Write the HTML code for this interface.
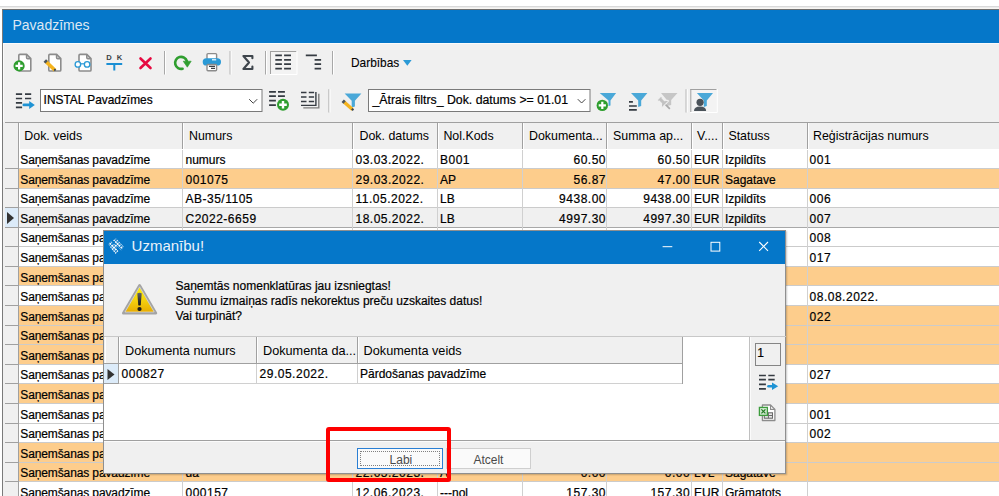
<!DOCTYPE html><html><head><meta charset="utf-8"><style>
*{margin:0;padding:0;box-sizing:border-box}
html,body{width:999px;height:496px;overflow:hidden;background:#fff;font-family:"Liberation Sans", sans-serif;color:#000}
.a{position:absolute}
.t{position:absolute;white-space:nowrap;font-size:12px;line-height:12px;-webkit-text-stroke:0.2px currentColor}
.r{text-align:right}

</style></head><body>
<div class="a" style="left:0;top:6px;width:999px;height:1px;background:#d9d9d9"></div>
<div class="a" style="left:0;top:7px;width:999px;height:1px;background:#ececec"></div>
<div class="a" style="left:0;top:8px;width:999px;height:1px;background:#f8f6f3"></div>
<div class="a" style="left:2px;top:9px;width:997px;height:487px;background:#f0f0f0;border-left:1px solid #7a7a7a;border-top:1px solid #6e6e6e"></div>
<div class="a" style="left:2.5px;top:10px;width:996.5px;height:33px;background:#0577c9"></div>
<div class="a" style="left:3px;top:43px;width:996px;height:1px;background:#fbfbfb"></div>
<div class="a" style="left:3px;top:43px;width:1px;height:79px;background:#fbfbfb"></div>
<div class="t" style="left:12.5px;top:18px;font-size:14px;line-height:14px;color:#dde7f3;-webkit-text-stroke:0">Pavadzīmes</div>
<div class="a" style="left:5px;top:122px;width:994px;height:1px;background:#a0a0a0"></div>
<div class="a" style="left:5px;top:123px;width:994px;height:26px;background:#f0f0f0"></div>
<div class="a" style="left:5px;top:149px;width:994px;height:1px;background:#a0a0a0"></div>
<div class="a" style="left:5px;top:150px;width:994px;height:346px;background:#fff"></div>
<div class="a" style="left:19px;top:149.40px;width:980px;height:19.58px;background:#ffffff;border-bottom:1px solid #cbcbcb"></div>
<div class="a" style="left:5px;top:149.40px;width:13px;height:19.58px;background:#f0f0f0;border-bottom:1px solid #a0a0a0"></div>
<div class="t" style="left:20.3px;top:154.04px;letter-spacing:-0.12px">Saņemšanas pavadzīme</div>
<div class="t" style="left:185.5px;top:154.04px">numurs</div>
<div class="t" style="left:355.5px;top:154.04px;letter-spacing:0.5px">03.03.2022.</div>
<div class="t" style="left:440px;top:154.04px;letter-spacing:0.5px">B001</div>
<div class="t r" style="left:506.0px;width:100px;top:154.04px;letter-spacing:0.5px">60.50</div>
<div class="t r" style="left:590.1px;width:100px;top:154.04px;letter-spacing:0.5px">60.50</div>
<div class="t" style="left:694px;top:154.04px">EUR</div>
<div class="t" style="left:725px;top:154.04px">Izpildīts</div>
<div class="t" style="left:809.6px;top:154.04px;letter-spacing:0.5px">001</div>
<div class="a" style="left:19px;top:168.98px;width:980px;height:19.58px;background:#fdcd8c;border-bottom:1px solid #cbcbcb"></div>
<div class="a" style="left:5px;top:168.98px;width:13px;height:19.58px;background:#f0f0f0;border-bottom:1px solid #a0a0a0"></div>
<div class="t" style="left:20.3px;top:173.62px;letter-spacing:-0.12px">Saņemšanas pavadzīme</div>
<div class="t" style="left:185.5px;top:173.62px;letter-spacing:0.5px">001075</div>
<div class="t" style="left:355.5px;top:173.62px;letter-spacing:0.5px">29.03.2022.</div>
<div class="t" style="left:440px;top:173.62px">AP</div>
<div class="t r" style="left:506.0px;width:100px;top:173.62px;letter-spacing:0.5px">56.87</div>
<div class="t r" style="left:590.1px;width:100px;top:173.62px;letter-spacing:0.5px">47.00</div>
<div class="t" style="left:694px;top:173.62px">EUR</div>
<div class="t" style="left:725px;top:173.62px">Sagatave</div>
<div class="a" style="left:19px;top:188.56px;width:980px;height:19.58px;background:#ffffff;border-bottom:1px solid #cbcbcb"></div>
<div class="a" style="left:5px;top:188.56px;width:13px;height:19.58px;background:#f0f0f0;border-bottom:1px solid #a0a0a0"></div>
<div class="t" style="left:20.3px;top:193.20px;letter-spacing:-0.12px">Saņemšanas pavadzīme</div>
<div class="t" style="left:185.5px;top:193.20px;letter-spacing:0.5px">AB-35/1105</div>
<div class="t" style="left:355.5px;top:193.20px;letter-spacing:0.5px">11.05.2022.</div>
<div class="t" style="left:440px;top:193.20px">LB</div>
<div class="t r" style="left:506.0px;width:100px;top:193.20px;letter-spacing:0.5px">9438.00</div>
<div class="t r" style="left:590.1px;width:100px;top:193.20px;letter-spacing:0.5px">9438.00</div>
<div class="t" style="left:694px;top:193.20px">EUR</div>
<div class="t" style="left:725px;top:193.20px">Izpildīts</div>
<div class="t" style="left:809.6px;top:193.20px;letter-spacing:0.5px">006</div>
<div class="a" style="left:19px;top:208.14px;width:980px;height:19.58px;background:#f0f0f0;border-bottom:1px solid #a8a8a8"></div>
<div class="a" style="left:5px;top:208.14px;width:13px;height:19.58px;background:#dcebf9;border-bottom:1px solid #a0a0a0"></div>
<svg class="a" style="left:6px;top:211.14px" width="10" height="14"><path d="M1 1 L8 7 L1 13Z" fill="#333"/></svg>
<div class="t" style="left:20.3px;top:212.78px;letter-spacing:-0.12px">Saņemšanas pavadzīme</div>
<div class="t" style="left:185.5px;top:212.78px;letter-spacing:0.5px">C2022-6659</div>
<div class="t" style="left:355.5px;top:212.78px;letter-spacing:0.5px">18.05.2022.</div>
<div class="t" style="left:440px;top:212.78px">LB</div>
<div class="t r" style="left:506.0px;width:100px;top:212.78px;letter-spacing:0.5px">4997.30</div>
<div class="t r" style="left:590.1px;width:100px;top:212.78px;letter-spacing:0.5px">4997.30</div>
<div class="t" style="left:694px;top:212.78px">EUR</div>
<div class="t" style="left:725px;top:212.78px">Izpildīts</div>
<div class="t" style="left:809.6px;top:212.78px;letter-spacing:0.5px">007</div>
<div class="a" style="left:19px;top:227.72px;width:980px;height:19.58px;background:#ffffff;border-bottom:1px solid #cbcbcb"></div>
<div class="a" style="left:5px;top:227.72px;width:13px;height:19.58px;background:#f0f0f0;border-bottom:1px solid #a0a0a0"></div>
<div class="t" style="left:20.3px;top:232.36px;letter-spacing:-0.12px">Saņemšanas pavadzīme</div>
<div class="t" style="left:809.6px;top:232.36px;letter-spacing:0.5px">008</div>
<div class="a" style="left:19px;top:247.30px;width:980px;height:19.58px;background:#ffffff;border-bottom:1px solid #cbcbcb"></div>
<div class="a" style="left:5px;top:247.30px;width:13px;height:19.58px;background:#f0f0f0;border-bottom:1px solid #a0a0a0"></div>
<div class="t" style="left:20.3px;top:251.94px;letter-spacing:-0.12px">Saņemšanas pavadzīme</div>
<div class="t" style="left:809.6px;top:251.94px;letter-spacing:0.5px">017</div>
<div class="a" style="left:19px;top:266.88px;width:980px;height:19.58px;background:#fdcd8c;border-bottom:1px solid #cbcbcb"></div>
<div class="a" style="left:5px;top:266.88px;width:13px;height:19.58px;background:#f0f0f0;border-bottom:1px solid #a0a0a0"></div>
<div class="t" style="left:20.3px;top:271.52px;letter-spacing:-0.12px">Saņemšanas pavadzīme</div>
<div class="a" style="left:19px;top:286.46px;width:980px;height:19.58px;background:#ffffff;border-bottom:1px solid #cbcbcb"></div>
<div class="a" style="left:5px;top:286.46px;width:13px;height:19.58px;background:#f0f0f0;border-bottom:1px solid #a0a0a0"></div>
<div class="t" style="left:20.3px;top:291.10px;letter-spacing:-0.12px">Saņemšanas pavadzīme</div>
<div class="t" style="left:809.6px;top:291.10px;letter-spacing:0.5px">08.08.2022.</div>
<div class="a" style="left:19px;top:306.04px;width:980px;height:19.58px;background:#fdcd8c;border-bottom:1px solid #cbcbcb"></div>
<div class="a" style="left:5px;top:306.04px;width:13px;height:19.58px;background:#f0f0f0;border-bottom:1px solid #a0a0a0"></div>
<div class="t" style="left:20.3px;top:310.68px;letter-spacing:-0.12px">Saņemšanas pavadzīme</div>
<div class="t" style="left:809.6px;top:310.68px;letter-spacing:0.5px">022</div>
<div class="a" style="left:19px;top:325.62px;width:980px;height:19.58px;background:#fdcd8c;border-bottom:1px solid #cbcbcb"></div>
<div class="a" style="left:5px;top:325.62px;width:13px;height:19.58px;background:#f0f0f0;border-bottom:1px solid #a0a0a0"></div>
<div class="t" style="left:20.3px;top:330.26px;letter-spacing:-0.12px">Saņemšanas pavadzīme</div>
<div class="a" style="left:19px;top:345.20px;width:980px;height:19.58px;background:#fdcd8c;border-bottom:1px solid #cbcbcb"></div>
<div class="a" style="left:5px;top:345.20px;width:13px;height:19.58px;background:#f0f0f0;border-bottom:1px solid #a0a0a0"></div>
<div class="t" style="left:20.3px;top:349.84px;letter-spacing:-0.12px">Saņemšanas pavadzīme</div>
<div class="a" style="left:19px;top:364.78px;width:980px;height:19.58px;background:#ffffff;border-bottom:1px solid #cbcbcb"></div>
<div class="a" style="left:5px;top:364.78px;width:13px;height:19.58px;background:#f0f0f0;border-bottom:1px solid #a0a0a0"></div>
<div class="t" style="left:20.3px;top:369.42px;letter-spacing:-0.12px">Saņemšanas pavadzīme</div>
<div class="t" style="left:809.6px;top:369.42px;letter-spacing:0.5px">027</div>
<div class="a" style="left:19px;top:384.36px;width:980px;height:19.58px;background:#fdcd8c;border-bottom:1px solid #cbcbcb"></div>
<div class="a" style="left:5px;top:384.36px;width:13px;height:19.58px;background:#f0f0f0;border-bottom:1px solid #a0a0a0"></div>
<div class="t" style="left:20.3px;top:389.00px;letter-spacing:-0.12px">Saņemšanas pavadzīme</div>
<div class="a" style="left:19px;top:403.94px;width:980px;height:19.58px;background:#ffffff;border-bottom:1px solid #cbcbcb"></div>
<div class="a" style="left:5px;top:403.94px;width:13px;height:19.58px;background:#f0f0f0;border-bottom:1px solid #a0a0a0"></div>
<div class="t" style="left:20.3px;top:408.58px;letter-spacing:-0.12px">Saņemšanas pavadzīme</div>
<div class="t" style="left:809.6px;top:408.58px;letter-spacing:0.5px">001</div>
<div class="a" style="left:19px;top:423.52px;width:980px;height:19.58px;background:#ffffff;border-bottom:1px solid #cbcbcb"></div>
<div class="a" style="left:5px;top:423.52px;width:13px;height:19.58px;background:#f0f0f0;border-bottom:1px solid #a0a0a0"></div>
<div class="t" style="left:20.3px;top:428.16px;letter-spacing:-0.12px">Saņemšanas pavadzīme</div>
<div class="t" style="left:809.6px;top:428.16px;letter-spacing:0.5px">002</div>
<div class="a" style="left:19px;top:443.10px;width:980px;height:19.58px;background:#fdcd8c;border-bottom:1px solid #cbcbcb"></div>
<div class="a" style="left:5px;top:443.10px;width:13px;height:19.58px;background:#f0f0f0;border-bottom:1px solid #a0a0a0"></div>
<div class="t" style="left:20.3px;top:447.74px;letter-spacing:-0.12px">Saņemšanas pavadzīme</div>
<div class="a" style="left:19px;top:462.68px;width:980px;height:19.58px;background:#fdcd8c;border-bottom:1px solid #cbcbcb"></div>
<div class="a" style="left:5px;top:462.68px;width:13px;height:19.58px;background:#f0f0f0;border-bottom:1px solid #a0a0a0"></div>
<div class="t" style="left:20.3px;top:467.32px;letter-spacing:-0.12px">Saņemšanas pavadzīme</div>
<div class="t" style="left:185.5px;top:467.32px">da</div>
<div class="t" style="left:355.5px;top:467.32px;letter-spacing:0.5px">22.05.2023.</div>
<div class="t" style="left:440px;top:467.32px">A</div>
<div class="t r" style="left:506.0px;width:100px;top:467.32px;letter-spacing:0.5px">0.00</div>
<div class="t r" style="left:590.1px;width:100px;top:467.32px;letter-spacing:0.5px">0.00</div>
<div class="t" style="left:694px;top:467.32px">LVL</div>
<div class="t" style="left:725px;top:467.32px">Sagatave</div>
<div class="a" style="left:19px;top:482.26px;width:980px;height:19.58px;background:#ffffff;border-bottom:1px solid #cbcbcb"></div>
<div class="a" style="left:5px;top:482.26px;width:13px;height:19.58px;background:#f0f0f0;border-bottom:1px solid #a0a0a0"></div>
<div class="t" style="left:20.3px;top:486.90px;letter-spacing:-0.12px">Saņemšanas pavadzīme</div>
<div class="t" style="left:185.5px;top:486.90px;letter-spacing:0.5px">000157</div>
<div class="t" style="left:355.5px;top:486.90px;letter-spacing:0.5px">12.06.2023.</div>
<div class="t" style="left:440px;top:486.90px">---nol</div>
<div class="t r" style="left:506.0px;width:100px;top:486.90px;letter-spacing:0.5px">157.30</div>
<div class="t r" style="left:590.1px;width:100px;top:486.90px;letter-spacing:0.5px">157.30</div>
<div class="t" style="left:694px;top:486.90px">EUR</div>
<div class="t" style="left:725px;top:486.90px">Grāmatots</div>
<div class="a" style="left:18px;top:123px;width:1px;height:26px;background:#a0a0a0"></div>
<div class="a" style="left:19px;top:123px;width:1px;height:26px;background:#fff"></div>
<div class="a" style="left:18px;top:150px;width:1px;height:346px;background:#a0a0a0"></div>
<div class="a" style="left:182px;top:123px;width:1px;height:26px;background:#a0a0a0"></div>
<div class="a" style="left:183px;top:123px;width:1px;height:26px;background:#fff"></div>
<div class="a" style="left:182px;top:150px;width:1px;height:346px;background:#d0d0d0"></div>
<div class="a" style="left:352px;top:123px;width:1px;height:26px;background:#a0a0a0"></div>
<div class="a" style="left:353px;top:123px;width:1px;height:26px;background:#fff"></div>
<div class="a" style="left:352px;top:150px;width:1px;height:346px;background:#d0d0d0"></div>
<div class="a" style="left:437px;top:123px;width:1px;height:26px;background:#a0a0a0"></div>
<div class="a" style="left:438px;top:123px;width:1px;height:26px;background:#fff"></div>
<div class="a" style="left:437px;top:150px;width:1px;height:346px;background:#d0d0d0"></div>
<div class="a" style="left:522px;top:123px;width:1px;height:26px;background:#a0a0a0"></div>
<div class="a" style="left:523px;top:123px;width:1px;height:26px;background:#fff"></div>
<div class="a" style="left:522px;top:150px;width:1px;height:346px;background:#d0d0d0"></div>
<div class="a" style="left:606px;top:123px;width:1px;height:26px;background:#a0a0a0"></div>
<div class="a" style="left:607px;top:123px;width:1px;height:26px;background:#fff"></div>
<div class="a" style="left:606px;top:150px;width:1px;height:346px;background:#d0d0d0"></div>
<div class="a" style="left:691px;top:123px;width:1px;height:26px;background:#a0a0a0"></div>
<div class="a" style="left:692px;top:123px;width:1px;height:26px;background:#fff"></div>
<div class="a" style="left:691px;top:150px;width:1px;height:346px;background:#d0d0d0"></div>
<div class="a" style="left:722px;top:123px;width:1px;height:26px;background:#a0a0a0"></div>
<div class="a" style="left:723px;top:123px;width:1px;height:26px;background:#fff"></div>
<div class="a" style="left:722px;top:150px;width:1px;height:346px;background:#d0d0d0"></div>
<div class="a" style="left:807px;top:123px;width:1px;height:26px;background:#a0a0a0"></div>
<div class="a" style="left:808px;top:123px;width:1px;height:26px;background:#fff"></div>
<div class="a" style="left:807px;top:150px;width:1px;height:346px;background:#d0d0d0"></div>
<div class="t" style="left:24.3px;top:130.00px;font-size:12.4px;line-height:12.4px;-webkit-text-stroke:0">Dok. veids</div>
<div class="t" style="left:189px;top:130.00px;font-size:12.4px;line-height:12.4px;-webkit-text-stroke:0">Numurs</div>
<div class="t" style="left:359.5px;top:130.00px;font-size:12.4px;line-height:12.4px;-webkit-text-stroke:0">Dok. datums</div>
<div class="t" style="left:443.4px;top:130.00px;font-size:12.4px;line-height:12.4px;-webkit-text-stroke:0">Nol.Kods</div>
<div class="t" style="left:529px;top:130.00px;font-size:12.4px;line-height:12.4px;-webkit-text-stroke:0">Dokumenta...</div>
<div class="t" style="left:613px;top:130.00px;font-size:12.4px;line-height:12.4px;-webkit-text-stroke:0">Summa ap...</div>
<div class="t" style="left:697px;top:130.00px;font-size:12.4px;line-height:12.4px;-webkit-text-stroke:0">V....</div>
<div class="t" style="left:728.4px;top:130.00px;font-size:12.4px;line-height:12.4px;-webkit-text-stroke:0">Statuss</div>
<div class="t" style="left:813px;top:130.00px;font-size:12.4px;line-height:12.4px;-webkit-text-stroke:0">Reģistrācijas numurs</div>
<svg class="a" style="left:0;top:0" width="999" height="122" viewBox="0 0 999 122">
<!-- doc icons -->
<g stroke="#8c8c8c" stroke-width="1.6" fill="#fff" stroke-linejoin="round">
 <path d="M18.8 55.5 Q18.8 54.4 19.9 54.4 L26.6 54.4 L30.8 58.6 L30.8 69.9 Q30.8 71 29.7 71 L19.9 71 Q18.8 71 18.8 69.9Z"/>
 <path d="M26.6 54.4 L26.6 57.5 Q26.6 58.6 27.7 58.6 L30.8 58.6" fill="none"/>
 <path d="M48.8 55.5 Q48.8 54.4 49.9 54.4 L56.6 54.4 L60.8 58.6 L60.8 69.9 Q60.8 71 59.7 71 L49.9 71 Q48.8 71 48.8 69.9Z"/>
 <path d="M56.6 54.4 L56.6 57.5 Q56.6 58.6 57.7 58.6 L60.8 58.6" fill="none"/>
 <path d="M79 55.5 Q79 54.4 80.1 54.4 L86.8 54.4 L91 58.6 L91 69.9 Q91 71 89.9 71 L80.1 71 Q79 71 79 69.9Z"/>
 <path d="M86.8 54.4 L86.8 57.5 Q86.8 58.6 87.9 58.6 L91 58.6" fill="none"/>
</g>
<circle cx="19.1" cy="65.9" r="5.6" fill="#2f9e2f"/>
<path d="M19.1 62.3 V69.5 M15.5 65.9 H22.7" stroke="#fff" stroke-width="2.2"/>
<!-- pencil -->
<path d="M45.6 61.3 L55 70.2" stroke="#f4b31e" stroke-width="3.6"/>
<path d="M44.8 60.5 L46.6 62.2" stroke="#4a5560" stroke-width="3.6"/>
<path d="M54.2 69.3 L55.6 70.6" stroke="#3a4550" stroke-width="2"/>
<!-- glasses -->
<g stroke="#2b9ad6" stroke-width="1.35" fill="#fff">
<circle cx="77.9" cy="64.4" r="2.75"/><circle cx="87.1" cy="64.4" r="2.75"/>
</g>
<path d="M80.6 63.8 H84.4" stroke="#2b9ad6" stroke-width="1.2"/>
<!-- DK -->
<text x="106.2" y="60.3" font-family="Liberation Sans" font-weight="bold" font-size="7.6" fill="#3b3f44">D</text>
<text x="116.8" y="60.3" font-family="Liberation Sans" font-weight="bold" font-size="7.6" fill="#3b3f44">K</text>
<path d="M106.4 64 H122.2 M114.3 64 V70.5" stroke="#1a8fd4" stroke-width="2"/>
<!-- red X -->
<path d="M140.5 58.5 L150.5 68 M150.5 58.5 L140.5 68" stroke="#e60a41" stroke-width="2.6" stroke-linecap="round"/>
<!-- separators -->
<g fill="#a8a8a8">
<rect x="164" y="51" width="1" height="23.5"/><rect x="229.6" y="51" width="1" height="23.5"/><rect x="265" y="51" width="1" height="23.5"/><rect x="332" y="51" width="1" height="23.5"/>
</g>
<g fill="#fff">
<rect x="165" y="51" width="1" height="23.5"/><rect x="230.6" y="51" width="1" height="23.5"/><rect x="266" y="51" width="1" height="23.5"/><rect x="333" y="51" width="1" height="23.5"/>
</g>
<!-- refresh -->
<path d="M182.6 68.7 A6 6 0 1 1 186.9 61.2" stroke="#2f9e2f" stroke-width="2.6" fill="none" stroke-linecap="round"/>
<path d="M183.2 61.2 L191.2 61.2 L187.3 67.2Z" fill="#2f9e2f" stroke="#2f9e2f" stroke-width="0.6" stroke-linejoin="round"/>
<!-- printer -->
<rect x="207" y="53.6" width="9.6" height="6" fill="#fff" stroke="#8c8c8c" stroke-width="1.4" rx="1"/>
<rect x="202.7" y="58.2" width="18.3" height="7.4" rx="3.7" fill="#2b9ad6"/>
<path d="M212 59.8 H216.2" stroke="#fff" stroke-width="1.2"/>
<rect x="207" y="64.5" width="9.6" height="6.3" fill="#fff" stroke="#8c8c8c" stroke-width="1.4" rx="1"/>
<path d="M209 66.4 H215 M211 68.4 H215" stroke="#3b3f44" stroke-width="1.1"/>
<!-- sigma -->
<path d="M252.4 58.2 V56 H243.4 L249 62.5 L243.4 69 H252.4 V66.6" stroke="#3f464d" stroke-width="2.1" fill="none" stroke-linejoin="round" stroke-linecap="round"/>
<!-- pressed button 1 -->
<rect x="270" y="51" width="27" height="23.5" fill="#f3f3f3"/>
<rect x="270" y="51" width="26.5" height="1" fill="#a0a0a0"/><rect x="270" y="51" width="1" height="23" fill="#a0a0a0"/>
<rect x="270" y="74" width="27" height="1" fill="#fff"/><rect x="296.5" y="51" width="1" height="23.5" fill="#fff"/>
<g stroke="#353b42" stroke-width="1.7">
<path d="M275.3 55.4 H281.9 M284.1 55.4 H291 M275.3 59.8 H281.9 M284.1 59.8 H291 M275.3 64.2 H281.9 M284.1 64.2 H291 M275.3 68.6 H281.9 M284.1 68.6 H291"/>
<path d="M305.8 55.4 H316.9 M314.6 59.8 H321.1 M314.6 64.2 H321.1 M314.6 68.6 H321.1"/>
</g>
<path d="M403 60 H411.6 L407.3 65.8Z" fill="#2b9ad6"/>
<!-- row 2 -->
<g stroke="#353b42" stroke-width="1.7">
<path d="M15.9 94.2 H22.1 M25 94.2 H31.2 M15.9 98.5 H22.1 M25 98.5 H31.2 M15.9 102.9 H22.1 M15.9 107.4 H22.1"/>
</g>
<path d="M23.8 104.9 H30" stroke="#1f93d4" stroke-width="2.6" stroke-linecap="round"/>
<path d="M29.2 101 L34.8 104.9 L29.2 108.9Z" fill="#1f93d4"/>
<!-- combobox 1 -->
<rect x="40.5" y="89.5" width="221.5" height="22" fill="#fff" stroke="#7a7a7a" stroke-width="1"/>
<path d="M249.2 99.2 L253.2 103.2 L257.2 99.2" stroke="#444" stroke-width="1" fill="none"/>
<!-- list add -->
<g stroke="#353b42" stroke-width="1.7">
<path d="M269.1 91.9 H275.9 M278 91.9 H284.9 M269.1 96.2 H275.9 M278 96.2 H284.9 M269.1 100.7 H275.9 M269.1 105.2 H275.9"/>
</g>
<circle cx="283" cy="104.8" r="6" fill="#2f9e2f"/>
<path d="M283 101 V108.6 M279.2 104.8 H286.8" stroke="#fff" stroke-width="2.4"/>
<!-- stacked -->
<path d="M303.3 107.9 H318.8 V93.7" stroke="#7d7d7d" stroke-width="1.4" fill="none"/>
<path d="M301 105.4 H315.9 V92.1" stroke="#353b42" stroke-width="1.4" fill="none"/>
<g stroke="#353b42" stroke-width="1.6">
<path d="M301 92.5 H306.5 M308.8 92.5 H314.1 M301 97 H306.5 M308.8 97 H314.1 M301 101.5 H306.5 M308.8 101.5 H314.1"/>
</g>
<!-- separators row 2 -->
<rect x="328.3" y="89.2" width="1.2" height="23.3" fill="#b8b8b8"/><rect x="329.5" y="89.2" width="1" height="23.3" fill="#fff"/>
<rect x="685.5" y="89.2" width="1.2" height="23.3" fill="#b8b8b8"/><rect x="686.7" y="89.2" width="1" height="23.3" fill="#fff"/>
<!-- filter pencil -->
<path d="M344.6 93.4 H361.4 L354.9 100.8 V106.6 L351.7 107.5 V100.8Z" fill="#4aa8d8"/>
<path d="M343.5 101.5 L352.5 109.5" stroke="#f4b31e" stroke-width="3.4"/>
<path d="M342.7 100.7 L344.6 102.4" stroke="#4a5560" stroke-width="3.4"/>
<path d="M351.8 108.8 L353.4 110.3" stroke="#3a4550" stroke-width="2"/>
<!-- combobox 2 -->
<rect x="368.5" y="89.5" width="221.5" height="22" fill="#fff" stroke="#7a7a7a" stroke-width="1"/>
<path d="M577.8 99.2 L581.6 103 L585.4 99.2" stroke="#444" stroke-width="1" fill="none"/>
<!-- filter add -->
<path d="M599.7 93.1 H616.1 L610.5 100.5 V105.4 L608.5 106 V100.5Z" fill="#4aa8d8"/>
<circle cx="602.3" cy="105.4" r="5.7" fill="#2f9e2f"/>
<path d="M602.3 101.8 V109 M598.7 105.4 H605.9" stroke="#fff" stroke-width="2.2"/>
<!-- filter list -->
<path d="M631 93.1 H647.4 L641.2 100.5 V106 L638.2 107 V100.5Z" fill="#4aa8d8"/>
<path d="M629 101.8 H632.9 M629 106 H636.8 M629 109.9 H636.8" stroke="#353b42" stroke-width="1.7"/>
<!-- pin filter disabled -->
<path d="M661 92.9 H677.5 L671.2 100.1 V105 L666.9 106 V100.1Z" fill="#c6c6c6"/>
<g transform="translate(664.2 103.2) rotate(-45)">
<path d="M-2.8 -7.2 H2.8 V-5.2 H2 V-1.6 L4.6 0.6 V1.6 H-4.6 V0.6 L-2 -1.6 V-5.2 H-2.8Z" fill="#c2c2c2" stroke="#f0f0f0" stroke-width="1"/>
<path d="M0 2 V8" stroke="#a9a9a9" stroke-width="1.7"/>
</g>
<!-- pressed button 2 -->
<rect x="690.5" y="89" width="26.5" height="23.5" fill="#f3f3f3"/>
<rect x="690.3" y="89" width="26.3" height="1" fill="#a0a0a0"/><rect x="690.3" y="89" width="1" height="23" fill="#a0a0a0"/>
<rect x="690.3" y="112" width="27" height="1" fill="#fff"/><rect x="716.8" y="89" width="1" height="23.5" fill="#fff"/>
<path d="M696.9 93 H713 L706.8 100.5 V106 L703.8 107 V100.5Z" fill="#4aa8d8"/>
<circle cx="700.1" cy="102.3" r="3.6" fill="#4a5259"/>
<path d="M694 110.9 Q694 106.4 700.1 106.4 Q706.1 106.4 706.1 110.9Z" fill="#4a5259"/>
</svg>
<div class="t" style="left:351px;top:57.2px;font-size:11.9px;line-height:12.6px;-webkit-text-stroke:0.1px currentColor">Darbības</div>
<div class="t" style="left:43.6px;top:93.6px;font-size:11.9px;line-height:12.3px">INSTAL Pavadzīmes</div>
<div class="t" style="left:372.5px;top:93.6px;font-size:12.3px;line-height:12.3px">_Ātrais filtrs_ Dok. datums &gt;= 01.01</div>

<div class="a" style="left:103px;top:229.5px;width:683px;height:244px;background:#f0f0f0;border:1px solid #8f8f8f;box-shadow:1px 1px 1.5px rgba(0,0,0,0.22)"></div>
<div class="a" style="left:104px;top:230.5px;width:681px;height:33px;background:#0577c9"></div>
<div class="t" style="left:131.6px;top:237.9px;font-size:15px;line-height:15px;color:#eaf1f9;-webkit-text-stroke:0">Uzmanību!</div>
<svg class="a" style="left:0;top:0" width="999" height="496" viewBox="0 0 999 496">
 <!-- dialog logo -->
 <defs><pattern id="chk" width="2.6" height="2.6" patternUnits="userSpaceOnUse" patternTransform="rotate(45)"><rect width="1.8" height="1.8" fill="#f4f8fc"/></pattern></defs>
 <g fill="url(#chk)">
  <path d="M108 244 L111 241 L118.5 251 L115.5 254Z"/>
  <path d="M113 240.2 L116 238.5 L124 247 L121 250.5Z"/>
  <path d="M110.5 247.5 L117 242 L119.5 245 L113 250.5Z"/>
 </g>
 <!-- title buttons -->
 <path d="M662.6 246.7 H672.3" stroke="#fff" stroke-width="1"/>
 <rect x="711" y="242.3" width="8.8" height="8.8" fill="none" stroke="#fff" stroke-width="1"/>
 <path d="M759.2 242 L768 250.8 M768 242 L759.2 250.8" stroke="#fff" stroke-width="1.1"/>
 <!-- warning icon -->
 <defs><linearGradient id="wg" x1="0" y1="0" x2="0" y2="1"><stop offset="0" stop-color="#fff500"/><stop offset="0.5" stop-color="#f5d410"/><stop offset="1" stop-color="#e6a800"/></linearGradient>
 <linearGradient id="eg" x1="0" y1="0" x2="0" y2="1"><stop offset="0" stop-color="#666"/><stop offset="1" stop-color="#111"/></linearGradient></defs>
 <path d="M139.6 285.2 L156 313.2 L123.2 313.2Z" fill="url(#wg)" stroke="#a4a4a4" stroke-width="2.4" stroke-linejoin="round"/>
 <path d="M139.6 286.8 L154.2 312 L125 312Z" fill="none" stroke="#e8e8e8" stroke-width="0.6" stroke-linejoin="round"/>
 <path d="M137.3 293.2 Q139.5 292.3 141.7 293.2 L140.7 305.2 Q139.5 305.8 138.3 305.2Z" fill="url(#eg)"/>
 <circle cx="139.5" cy="309" r="2.1" fill="#1a1a1a"/>
</svg>
<div class="t" style="left:175.5px;top:278.7px;font-size:12px;line-height:15.3px">Saņemtās nomenklatūras jau izsniegtas!<br>Summu izmaiņas radīs nekorektus preču uzskaites datus!<br>Vai turpināt?</div>
<!-- inner panel -->
<div class="a" style="left:104px;top:336px;width:681.5px;height:1px;background:#c8c8c8"></div>
<div class="a" style="left:104px;top:337px;width:645px;height:103px;background:#fff"></div>
<div class="a" style="left:749px;top:337px;width:1px;height:103.5px;background:#c0c0c0"></div><div class="a" style="left:750px;top:337px;width:1px;height:103.5px;background:#fbfbfb"></div>
<div class="a" style="left:104px;top:440px;width:681px;height:1px;background:#a0a0a0"></div><div class="a" style="left:104px;top:441px;width:681px;height:1px;background:#fbfbfb"></div>
<!-- inner grid header -->
<div class="a" style="left:104px;top:337px;width:578px;height:27px;background:#f0f0f0;border-bottom:1px solid #a0a0a0"></div>
<div class="a" style="left:682px;top:337px;width:1px;height:47px;background:#a0a0a0"></div>
<div class="a" style="left:104px;top:364px;width:14px;height:20px;background:#dcebf9;border-bottom:1px solid #a0a0a0"></div>
<div class="a" style="left:118px;top:364px;width:564px;height:20px;border-bottom:1px solid #d0d0d0"></div>
<div class="a" style="left:118px;top:337px;width:1px;height:47px;background:#a0a0a0"></div>
<div class="a" style="left:119px;top:337px;width:1px;height:26px;background:#fff"></div>
<div class="a" style="left:105px;top:337px;width:1px;height:26px;background:#fff"></div>
<div class="a" style="left:256px;top:337px;width:1px;height:26px;background:#a0a0a0"></div>
<div class="a" style="left:257px;top:337px;width:1px;height:26px;background:#fff"></div>
<div class="a" style="left:256px;top:364px;width:1px;height:20px;background:#d0d0d0"></div>
<div class="a" style="left:357px;top:337px;width:1px;height:26px;background:#a0a0a0"></div>
<div class="a" style="left:358px;top:337px;width:1px;height:26px;background:#fff"></div>
<div class="a" style="left:357px;top:364px;width:1px;height:20px;background:#d0d0d0"></div>
<svg class="a" style="left:106px;top:367.5px" width="12" height="14"><path d="M1.5 1 L8.5 6.5 L1.5 12Z" fill="#333"/></svg>
<div class="t" style="left:125px;top:344.9px;font-size:12.7px;line-height:12.7px;-webkit-text-stroke:0">Dokumenta numurs</div>
<div class="t" style="left:263px;top:344.9px;font-size:12.7px;line-height:12.7px;letter-spacing:0px;-webkit-text-stroke:0">Dokumenta da...</div>
<div class="t" style="left:363.6px;top:344.9px;font-size:12.7px;line-height:12.7px;-webkit-text-stroke:0">Dokumenta veids</div>
<div class="t" style="left:121.6px;top:368.3px;letter-spacing:0.5px">000827</div>
<div class="t" style="left:259.6px;top:368.3px;letter-spacing:0.5px">29.05.2022.</div>
<div class="t" style="left:360px;top:368.3px">Pārdošanas pavadzīme</div>
<!-- right panel -->
<div class="a" style="left:754.5px;top:343px;width:26px;height:22.5px;background:#f0f0f0;border:1px solid #858585"></div>
<div class="t" style="left:757.2px;top:347.4px">1</div>
<svg class="a" style="left:0;top:0" width="999" height="496" viewBox="0 0 999 496">
<g stroke="#353b42" stroke-width="1.7">
<path d="M759 375.5 H765.9 M768.3 375.5 H774.7 M759 379.7 H765.9 M768.3 379.7 H774.7 M759 384.3 H765.9 M759 388.8 H765.9"/>
</g>
<path d="M768.5 386.2 H773.5" stroke="#1f93d4" stroke-width="2.6" stroke-linecap="round"/>
<path d="M772 382.4 L778.2 386.2 L772 390Z" fill="#1f93d4"/>
<!-- excel -->
<path d="M762.4 405 H770.5 L774.9 409.4 V420.5 H762.4Z" fill="#fff" stroke="#8c8c8c" stroke-width="1.3" stroke-linejoin="round"/>
<path d="M770.5 405 V409.4 H774.9" fill="none" stroke="#8c8c8c" stroke-width="1.1"/>
<rect x="764.3" y="412.8" width="8.2" height="5.4" fill="#e8e8e8" stroke="#6a6a6a" stroke-width="1.1"/>
<path d="M768.4 412.8 V418.2 M764.3 415.5 H772.5" stroke="#6a6a6a" stroke-width="1"/>
<rect x="759.4" y="407.4" width="8" height="8" fill="#cfe8cf" stroke="#3c9c3c" stroke-width="1.3"/>
<path d="M761.4 409.4 L765.4 413.4 M765.4 409.4 L761.4 413.4" stroke="#237a23" stroke-width="1.2"/>
</svg>
<!-- buttons -->
<div class="a" style="left:357px;top:447.5px;width:85.6px;height:21.3px;background:#fafafa;border:1px solid #2a7fd4"></div>
<div class="a" style="left:360px;top:450.5px;width:79.6px;height:15.3px;border:1px dotted #808080"></div>
<div class="t" style="left:389.6px;top:453.6px;color:#4a4a4a;-webkit-text-stroke:0">Labi</div>
<div class="a" style="left:446.4px;top:447.5px;width:85.1px;height:21.3px;background:#fafafa;border:1px solid #cfcfcf"></div>
<div class="t" style="left:473.4px;top:453.6px;color:#4a4a4a;-webkit-text-stroke:0">Atcelt</div>
<!-- red annotation -->
<div class="a" style="left:326px;top:426.7px;width:124.6px;height:55.5px;border:4px solid #fe0000;border-radius:3px"></div>

</body></html>
